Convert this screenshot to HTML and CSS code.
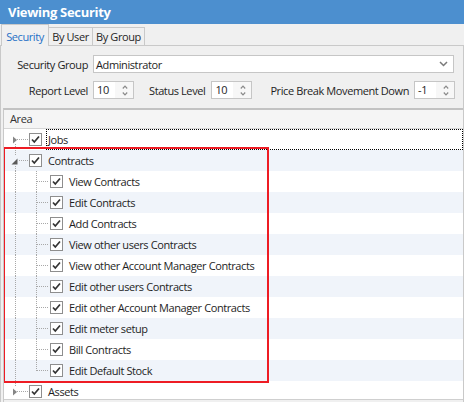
FILE: index.html
```html
<!DOCTYPE html>
<html>
<head>
<meta charset="utf-8">
<link rel="stylesheet" href="styles.css">
</head>
<body>
<div class="win">
  <div class="titlebar">Viewing Security</div>
  <div class="tabs">
    <div class="tab sel">Security</div>
    <div class="tab t-user">By User</div>
    <div class="tab t-group">By Group</div>
  </div>
  <div class="page">
    <div class="frow r1">
      <span class="lbl lbl-first">Security Group</span>
      <div class="combo">
        <span class="combo-text">Administrator</span>
        <svg class="chev" width="9" height="6" viewBox="0 0 9 6"><path d="M1 1 L4.5 4.5 L8 1" fill="none" stroke="#7a7a7a" stroke-width="1.5"/></svg>
      </div>
    </div>
    <div class="frow r2">
      <span class="lbl lbl-first">Report Level</span>
      <div class="spin"><span class="spin-text">10</span><span class="spin-btn"><svg width="6" height="11" viewBox="0 0 6 11"><path d="M0.8 3.5 L3 1.2 L5.2 3.5 M0.8 7.5 L3 9.8 L5.2 7.5" fill="none" stroke="#8a8a8a" stroke-width="1.2"/></svg></span></div>
      <span class="lbl lbl-status">Status Level</span>
      <div class="spin"><span class="spin-text">10</span><span class="spin-btn"><svg width="6" height="11" viewBox="0 0 6 11"><path d="M0.8 3.5 L3 1.2 L5.2 3.5 M0.8 7.5 L3 9.8 L5.2 7.5" fill="none" stroke="#8a8a8a" stroke-width="1.2"/></svg></span></div>
      <span class="lbl lbl-price">Price Break Movement Down</span>
      <div class="spin"><span class="spin-text">-1</span><span class="spin-btn"><svg width="6" height="11" viewBox="0 0 6 11"><path d="M0.8 3.5 L3 1.2 L5.2 3.5 M0.8 7.5 L3 9.8 L5.2 7.5" fill="none" stroke="#8a8a8a" stroke-width="1.2"/></svg></span></div>
    </div>
    <div class="grid">
      <div class="ghead">Area</div>
      <div class="gbody">
        <div class="row">
          <span class="g0 g0-first"><svg class="exp" width="6" height="8" viewBox="0 0 6 8"><path d="M1 0.5 L5 4 L1 7.5 Z" fill="#858585"/></svg></span>
          <span class="cb"><svg width="11" height="11" viewBox="0 0 11 11"><path d="M2 5.5 L4.3 8 L9 2.5" fill="none" stroke="#333" stroke-width="1.7"/></svg></span>
          <span class="txt focus">Jobs</span>
        </div>
        <div class="row alt">
          <span class="g0 g0-mid"><svg class="exp exp-open" width="7" height="7" viewBox="0 0 7 7"><path d="M6.5 0.5 L6.5 6.5 L0.5 6.5 Z" fill="#5a5a5a"/></svg></span>
          <span class="cb"><svg width="11" height="11" viewBox="0 0 11 11"><path d="M2 5.5 L4.3 8 L9 2.5" fill="none" stroke="#333" stroke-width="1.7"/></svg></span>
          <span class="txt">Contracts</span>
        </div>
        <div class="row">
          <span class="g0 g0-pass"></span><span class="g1"></span>
          <span class="cb"><svg width="11" height="11" viewBox="0 0 11 11"><path d="M2 5.5 L4.3 8 L9 2.5" fill="none" stroke="#333" stroke-width="1.7"/></svg></span>
          <span class="txt">View Contracts</span>
        </div>
        <div class="row alt">
          <span class="g0 g0-pass"></span><span class="g1"></span>
          <span class="cb"><svg width="11" height="11" viewBox="0 0 11 11"><path d="M2 5.5 L4.3 8 L9 2.5" fill="none" stroke="#333" stroke-width="1.7"/></svg></span>
          <span class="txt">Edit Contracts</span>
        </div>
        <div class="row">
          <span class="g0 g0-pass"></span><span class="g1"></span>
          <span class="cb"><svg width="11" height="11" viewBox="0 0 11 11"><path d="M2 5.5 L4.3 8 L9 2.5" fill="none" stroke="#333" stroke-width="1.7"/></svg></span>
          <span class="txt">Add Contracts</span>
        </div>
        <div class="row alt">
          <span class="g0 g0-pass"></span><span class="g1"></span>
          <span class="cb"><svg width="11" height="11" viewBox="0 0 11 11"><path d="M2 5.5 L4.3 8 L9 2.5" fill="none" stroke="#333" stroke-width="1.7"/></svg></span>
          <span class="txt">View other users Contracts</span>
        </div>
        <div class="row">
          <span class="g0 g0-pass"></span><span class="g1"></span>
          <span class="cb"><svg width="11" height="11" viewBox="0 0 11 11"><path d="M2 5.5 L4.3 8 L9 2.5" fill="none" stroke="#333" stroke-width="1.7"/></svg></span>
          <span class="txt">View other Account Manager Contracts</span>
        </div>
        <div class="row alt">
          <span class="g0 g0-pass"></span><span class="g1"></span>
          <span class="cb"><svg width="11" height="11" viewBox="0 0 11 11"><path d="M2 5.5 L4.3 8 L9 2.5" fill="none" stroke="#333" stroke-width="1.7"/></svg></span>
          <span class="txt">Edit other users Contracts</span>
        </div>
        <div class="row">
          <span class="g0 g0-pass"></span><span class="g1"></span>
          <span class="cb"><svg width="11" height="11" viewBox="0 0 11 11"><path d="M2 5.5 L4.3 8 L9 2.5" fill="none" stroke="#333" stroke-width="1.7"/></svg></span>
          <span class="txt">Edit other Account Manager Contracts</span>
        </div>
        <div class="row alt">
          <span class="g0 g0-pass"></span><span class="g1"></span>
          <span class="cb"><svg width="11" height="11" viewBox="0 0 11 11"><path d="M2 5.5 L4.3 8 L9 2.5" fill="none" stroke="#333" stroke-width="1.7"/></svg></span>
          <span class="txt">Edit meter setup</span>
        </div>
        <div class="row">
          <span class="g0 g0-pass"></span><span class="g1"></span>
          <span class="cb"><svg width="11" height="11" viewBox="0 0 11 11"><path d="M2 5.5 L4.3 8 L9 2.5" fill="none" stroke="#333" stroke-width="1.7"/></svg></span>
          <span class="txt">Bill Contracts</span>
        </div>
        <div class="row alt">
          <span class="g0 g0-pass"></span><span class="g1 g1-last"></span>
          <span class="cb"><svg width="11" height="11" viewBox="0 0 11 11"><path d="M2 5.5 L4.3 8 L9 2.5" fill="none" stroke="#333" stroke-width="1.7"/></svg></span>
          <span class="txt">Edit Default Stock</span>
        </div>
        <div class="row">
          <span class="g0 g0-last"><svg class="exp" width="6" height="8" viewBox="0 0 6 8"><path d="M1 0.5 L5 4 L1 7.5 Z" fill="#858585"/></svg></span>
          <span class="cb"><svg width="11" height="11" viewBox="0 0 11 11"><path d="M2 5.5 L4.3 8 L9 2.5" fill="none" stroke="#333" stroke-width="1.7"/></svg></span>
          <span class="txt">Assets</span>
        </div>
        <div class="highlight"></div>
      </div>
    </div>
  </div>
</div>
</body>
</html>
```
FILE: styles.css
```css
* { box-sizing: border-box; }
html, body { margin: 0; padding: 0; }
body {
  font-family: "Open Sans", "Noto Sans", "DejaVu Sans", sans-serif;
  font-size: 11px;
  letter-spacing: -0.4px;
  color: #1e1e1e;
  background: #f0f0f0;
}
.win {
  width: 464px;
  height: 402px;
  overflow: hidden;
  background: #f0f0f0;
  display: flex;
  flex-direction: column;
}
.titlebar {
  height: 24px;
  flex: none;
  background: #4c8fcf;
  color: #fff;
  font-weight: bold;
  font-size: 13px;
  letter-spacing: -0.3px;
  line-height: 24px;
  padding-left: 8px;
}
.tabs {
  height: 22px;
  flex: none;
  display: flex;
  align-items: flex-end;
  padding-left: 1px;
  border-bottom: 1px solid #c9c9c9;
}
.tab {
  height: 18px;
  line-height: 17px;
  border: 1px solid #c9c9c9;
  border-bottom: none;
  border-left: none;
  text-align: center;
  color: #262626;
}
.t-user { width: 44px; }
.t-group { width: 52px; }
.tab.sel {
  width: 48px;
  height: 22px;
  margin-bottom: -1px;
  line-height: 23px;
  border-left: 1px solid #c9c9c9;
  background: #f0f0f0;
  color: #1e6fc6;
}
.page {
  flex: 1;
  border-left: 1px solid #c9c9c9;
  border-right: 1px solid #c9c9c9;
  padding: 9px 0 0 1px;
  display: flex;
  flex-direction: column;
}
.frow {
  display: flex;
  align-items: center;
}
.r1 { height: 18px; }
.r2 { height: 18px; margin-top: 8px; }
.lbl { white-space: nowrap; }
.lbl-first { width: 86px; text-align: right; margin-right: 5px; }
.lbl-status { margin-left: 15px; margin-right: 6px; }
.lbl-price { margin-left: 18px; margin-right: 5px; }
.combo {
  width: 361px;
  height: 18px;
  background: #fff;
  border: 1px solid #c6c6c6;
  display: flex;
  align-items: center;
  padding-left: 2px;
}
.combo-text { flex: 1; }
.chev { margin-right: 5px; }
.spin {
  width: 41px;
  height: 18px;
  background: #fff;
  border: 1px solid #c6c6c6;
  display: flex;
}
.spin-text { flex: 1; padding-left: 3px; line-height: 15px; }
.spin-btn {
  width: 18px;
  background: #f7f7f7;
  display: flex;
  align-items: center;
  justify-content: center;
  padding-left: 2px;
}
.grid {
  margin-top: 9px;
  margin-left: 1px;
  flex: 1;
  display: flex;
  flex-direction: column;
  border-left: 1px solid #c9c9c9;
  border-top: 2px solid #c2c2c2;
}
.ghead {
  height: 19px;
  flex: none;
  background: #f5f5f5;
  border-bottom: 1px solid #d6d6d6;
  line-height: 18px;
  padding-left: 6px;
  color: #333;
}
.gbody {
  position: relative;
  height: 271px;
  flex: none;
  overflow: hidden;
  background: #fff;
  border-bottom: 1px solid #cfcfcf;
}
.row {
  height: 21px;
  display: flex;
  align-items: center;
  background: #fff;
}
.row.alt { background: #f0f4fa; }
.g0, .g1 {
  height: 21px;
  flex: none;
  display: flex;
  align-items: center;
  background-repeat: no-repeat;
}
.g0 { width: 24px; }
.g1 { width: 21px; }
/* dotted tree lines */
.g0-first {
  background-image:
    repeating-linear-gradient(to bottom, #a8a8a8 0 1px, transparent 1px 2px),
    repeating-linear-gradient(to right, #a8a8a8 0 1px, transparent 1px 2px);
  background-size: 1px 6px, 11px 1px;
  background-position: 11px 15px, 13px 10px;
}
.g0-mid {
  background-image:
    repeating-linear-gradient(to bottom, #a8a8a8 0 1px, transparent 1px 2px),
    repeating-linear-gradient(to bottom, #a8a8a8 0 1px, transparent 1px 2px),
    repeating-linear-gradient(to right, #a8a8a8 0 1px, transparent 1px 2px);
  background-size: 1px 5px, 1px 6px, 9px 1px;
  background-position: 11px 0, 11px 16px, 15px 10px;
}
.g0-pass {
  background-image: repeating-linear-gradient(to bottom, #a8a8a8 0 1px, transparent 1px 2px);
  background-size: 1px 21px;
  background-position: 11px 0;
}
.g0-last {
  background-image:
    repeating-linear-gradient(to bottom, #a8a8a8 0 1px, transparent 1px 2px),
    repeating-linear-gradient(to right, #a8a8a8 0 1px, transparent 1px 2px);
  background-size: 1px 6px, 11px 1px;
  background-position: 11px 0, 13px 10px;
}
.g1 {
  background-image:
    repeating-linear-gradient(to bottom, #a8a8a8 0 1px, transparent 1px 2px),
    repeating-linear-gradient(to right, #a8a8a8 0 1px, transparent 1px 2px);
  background-size: 1px 21px, 12px 1px;
  background-position: 8px 0, 9px 10px;
}
.g1-last { background-size: 1px 11px, 12px 1px; }
.exp { margin-left: 8px; }
.exp-open { margin-left: 7px; margin-top: 2px; }
.cb {
  width: 13px;
  height: 13px;
  flex: none;
  margin-left: 1px;
  border: 1px solid #8e8e8e;
  background: #fff;
  display: flex;
  align-items: center;
  justify-content: center;
}
.cb svg { display: block; }
.txt {
  margin-left: 4px;
  height: 21px;
  line-height: 19px;
  padding-left: 1px;
  border: 1px solid transparent;
  white-space: nowrap;
}
.txt.focus {
  flex: 1;
  border: 1px dotted #000;
}
.highlight {
  position: absolute;
  left: -1px;
  top: 18px;
  width: 266px;
  height: 236px;
  border: 2px solid #ee1c24;
  pointer-events: none;
}
```
